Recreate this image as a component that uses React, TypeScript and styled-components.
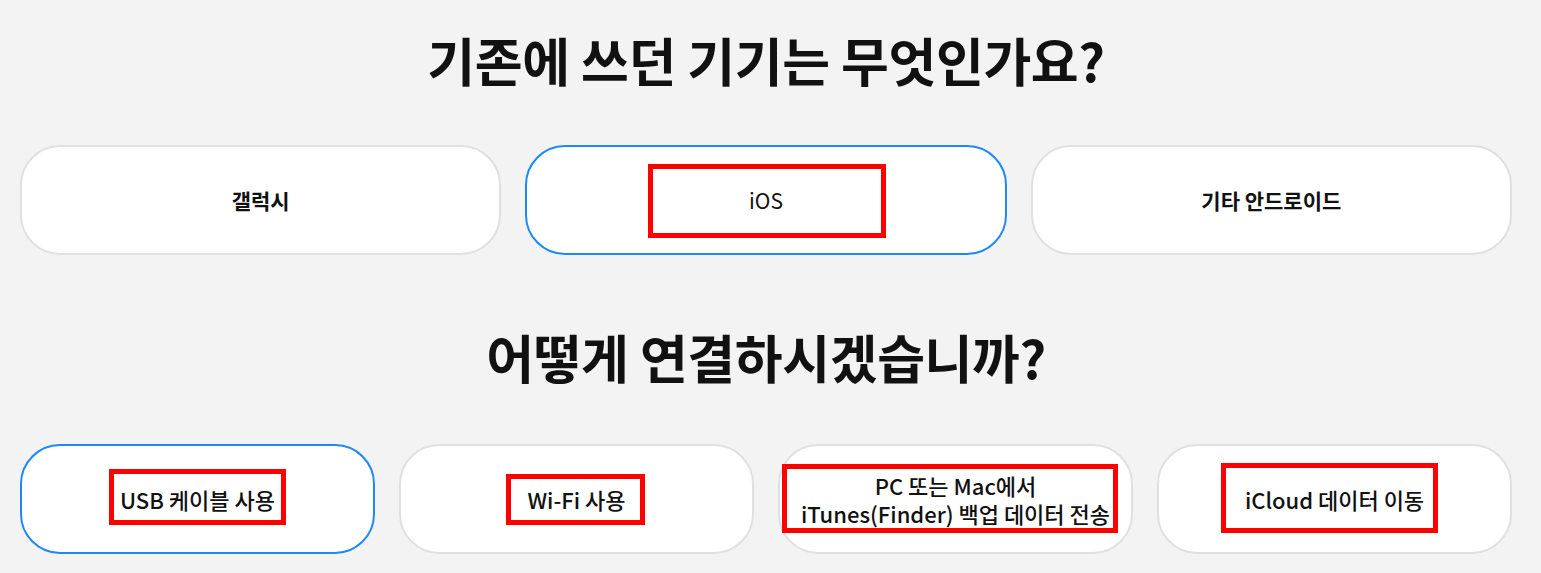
import React from 'react'
import styled, { createGlobalStyle } from 'styled-components'

const GlobalStyle = createGlobalStyle`
    html, body {
        margin: 0;
        padding: 0;
        background: #f3f3f3;
    }
    body {
        font-family: "Noto Sans CJK KR", "Noto Sans", sans-serif;
        color: #111;
    }
`;

const Page = styled.div`
    width: 1492px;
    padding: 29px 0 0 20px;
`;

const Question = styled.h2<{ $top: number; $gap: number }>`
    margin: ${p => p.$top}px 0 ${p => p.$gap}px;
    font-size: 52px;
    line-height: 62px;
    font-weight: 700;
    letter-spacing: -0.4px;
    text-align: center;
`;

const Options = styled.div<{ $cols: number }>`
    display: grid;
    grid-template-columns: repeat(${p => p.$cols}, 1fr);
    gap: 24px;
`;

const Option = styled.button<{ $active?: boolean; $weight: number; $size: number }>`
    position: relative;
    box-sizing: border-box;
    height: 110px;
    display: flex;
    align-items: center;
    justify-content: center;
    padding: 0 16px;
    background: #fff;
    border: 2px solid ${p => (p.$active ? '#1e88f7' : '#e0e0e0')};
    border-radius: 40px;
    font-family: inherit;
    font-size: ${p => p.$size}px;
    font-weight: ${p => p.$weight};
    line-height: 28px;
    color: #111;
    text-align: center;
    cursor: pointer;
`;

const Line = styled.span`
    display: block;
`;

// red highlight frame laid over a card
const Mark = styled.span<{ $x: number; $y: number; $w: number; $h: number }>`
    position: absolute;
    left: ${p => p.$x - 2}px;
    top: ${p => p.$y - 2}px;
    width: ${p => p.$w}px;
    height: ${p => p.$h}px;
    box-sizing: border-box;
    border: 5px solid #ff0000;
    pointer-events: none;
`;

type Box = { x: number; y: number; w: number; h: number };
type Item = { label: string[]; active?: boolean; weight: number; mark?: Box };

const devices: Item[] = [
    { label: ['갤럭시'], weight: 700 },
    { label: ['iOS'], active: true, weight: 400, mark: { x: 123, y: 19, w: 238, h: 74 } },
    { label: ['기타 안드로이드'], weight: 700 },
];

const methods: Item[] = [
    { label: ['USB 케이블 사용'], active: true, weight: 500, mark: { x: 89, y: 25, w: 177, h: 56 } },
    { label: ['Wi-Fi 사용'], weight: 500, mark: { x: 107, y: 30, w: 139, h: 51 } },
    {
        label: ['PC 또는 Mac에서', 'iTunes(Finder) 백업 데이터 전송'],
        weight: 500,
        mark: { x: 4, y: 20, w: 336, h: 69 },
    },
    { label: ['iCloud 데이터 이동'], weight: 500, mark: { x: 64, y: 19, w: 217, h: 70 } },
];

const OptionGrid = ({ items, size }: { items: Item[]; size: number }) => (
    <Options $cols={items.length}>
        {items.map(item => (
            <Option key={item.label.join()} $active={item.active} $weight={item.weight} $size={size}>
                <span>
                    {item.label.map(line => (
                        <Line key={line}>{line}</Line>
                    ))}
                </span>
                {item.mark && <Mark $x={item.mark.x} $y={item.mark.y} $w={item.mark.w} $h={item.mark.h} />}
            </Option>
        ))}
    </Options>
);

const App = () => {
    return (
        <Page>
            <GlobalStyle />
            <Question $top={0} $gap={54}>기존에 쓰던 기기는 무엇인가요?</Question>
            <OptionGrid items={devices} size={21} />
            <Question $top={71} $gap={56}>어떻게 연결하시겠습니까?</Question>
            <OptionGrid items={methods} size={22} />
        </Page>
    )
}

export default App
